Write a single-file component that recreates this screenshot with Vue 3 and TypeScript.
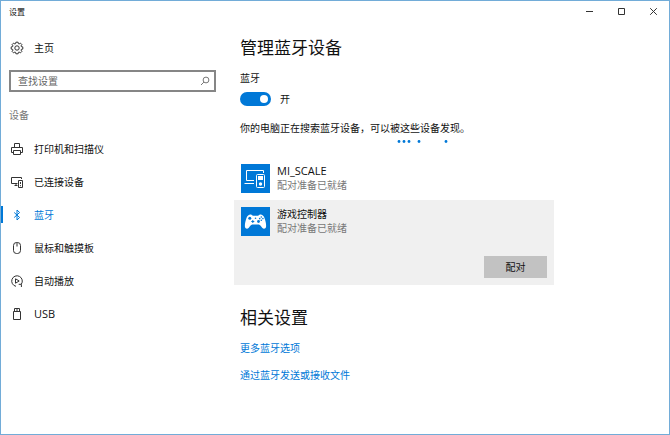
<script setup lang="ts">
import { ref } from 'vue'

interface NavItem {
  id: string
  label: string
  latin?: boolean
}

interface Device {
  id: string
  name: string
  status: string
  latin?: boolean
}

const navItems: NavItem[] = [
  { id: 'printer', label: '打印机和扫描仪' },
  { id: 'connected', label: '已连接设备' },
  { id: 'bluetooth', label: '蓝牙' },
  { id: 'mouse', label: '鼠标和触摸板' },
  { id: 'autoplay', label: '自动播放' },
  { id: 'usb', label: 'USB', latin: true },
]

const devices: Device[] = [
  { id: 'scale', name: 'MI_SCALE', status: '配对准备已就绪', latin: true },
  { id: 'gamepad', name: '游戏控制器', status: '配对准备已就绪' },
]

const links: string[] = ['更多蓝牙选项', '通过蓝牙发送或接收文件']

const current = ref('bluetooth')
const selected = ref('gamepad')
const enabled = ref(true)
const query = ref('')
</script>

<template>
  <div class="window">
    <header class="titlebar">
      <span class="title">设置</span>
      <div class="controls">
        <button type="button" class="control" aria-label="最小化">
          <svg width="9" height="9" viewBox="0 0 9 9"><path d="M1 4.5H8" /></svg>
        </button>
        <button type="button" class="control" aria-label="最大化">
          <svg width="9" height="9" viewBox="0 0 9 9"><path d="M1.5 1.5H7.5V7.5H1.5Z" /></svg>
        </button>
        <button type="button" class="control" aria-label="关闭">
          <svg width="9" height="9" viewBox="0 0 9 9"><path d="M1.2 1.2L7.8 7.8M7.8 1.2L1.2 7.8" /></svg>
        </button>
      </div>
    </header>

    <div class="body">
      <aside class="sidebar">
        <a href="#home" class="home">
          <svg class="icon" viewBox="0 0 14 14">
            <path d="M5.9 1.2H8.1L8.4 2.7L9.1 3L10.4 2.1L11.9 3.6L11 4.9L11.3 5.6L12.8 5.9V8.1L11.3 8.4L11 9.1L11.9 10.4L10.4 11.9L9.1 11L8.4 11.3L8.1 12.8H5.9L5.6 11.3L4.9 11L3.6 11.9L2.1 10.4L3 9.1L2.7 8.4L1.2 8.1V5.9L2.7 5.6L3 4.9L2.1 3.6L3.6 2.1L4.9 3L5.6 2.7Z" />
            <circle cx="7" cy="7" r="2.2" />
          </svg>
          <span>主页</span>
        </a>
        <label class="search">
          <input v-model="query" type="text" placeholder="查找设置" aria-label="查找设置" />
          <svg width="10" height="10" viewBox="0 0 10 10">
            <circle cx="6" cy="4" r="2.9" />
            <path d="M3.9 6.1L1 9" />
          </svg>
        </label>
        <h2 class="group">设备</h2>
        <nav>
          <a
            v-for="item in navItems"
            :key="item.id"
            :href="'#' + item.id"
            class="nav-item"
            :class="{ active: current === item.id }"
            @click.prevent="current = item.id"
          >
            <svg v-if="item.id === 'printer'" class="icon" viewBox="0 0 14 14">
              <path d="M4.5 5.5V1.5H9.5V5.5M3.5 10.5H1.5V5.5H12.5V10.5H10.5M3.5 8.5H10.5V12.5H3.5Z" />
            </svg>
            <svg v-else-if="item.id === 'connected'" class="icon" viewBox="0 0 14 14">
              <path d="M7.5 8.5H1.5V2.5H11.5V4M4.5 10.5H7.5M6 8.5V10.5M8.5 5.5H12.5V12.5H8.5Z" />
              <path d="M10.5 7V9M10.5 10.2V11.2" />
            </svg>
            <svg v-else-if="item.id === 'bluetooth'" class="icon" viewBox="0 0 14 14">
              <path d="M4.2 4.5L9.6 9.5L7 12V2L9.6 4.5L4.2 9.5" />
            </svg>
            <svg v-else-if="item.id === 'mouse'" class="icon" viewBox="0 0 14 14">
              <rect x="3.5" y="1.5" width="7" height="11" rx="3" />
              <path d="M7 1.5V5.5" />
            </svg>
            <svg v-else-if="item.id === 'autoplay'" class="icon" viewBox="0 0 14 14">
              <path d="M6 12.3A5.3 5.3 0 1 1 11.3 10.2M8.7 10.3H11.4V13M5.5 4.8V9.2L9.2 7Z" />
            </svg>
            <svg v-else class="icon" viewBox="0 0 14 14">
              <path d="M4.5 4.5V1.5H9.5V4.5M3.5 4.5H10.5V12.5H3.5ZM6 3H8" />
            </svg>
            <span :class="{ latin: item.latin }">{{ item.label }}</span>
          </a>
        </nav>
      </aside>

      <main class="content">
        <h1>管理蓝牙设备</h1>
        <label class="toggle-label" for="bluetooth-switch">蓝牙</label>
        <div class="toggle">
          <input id="bluetooth-switch" v-model="enabled" type="checkbox" role="switch" />
          <span>{{ enabled ? '开' : '关' }}</span>
        </div>
        <p class="hint">你的电脑正在搜索蓝牙设备，可以被这些设备发现。</p>
        <div class="progress">
          <svg width="52" height="3" viewBox="0 0 52 3">
            <circle cx="2" cy="1.5" r="1.4" />
            <circle cx="7" cy="1.5" r="1.4" />
            <circle cx="12" cy="1.5" r="1.4" />
            <circle cx="22" cy="1.5" r="1.4" />
            <circle cx="49" cy="1.5" r="1.4" />
          </svg>
        </div>

        <ul class="devices">
          <li
            v-for="device in devices"
            :key="device.id"
            class="device"
            :class="{ selected: selected === device.id }"
            @click="selected = device.id"
          >
            <div class="summary">
              <svg v-if="device.id === 'scale'" class="tile" viewBox="0 0 29 29">
                <path class="line" d="M13 16.5H5.5V6.5H22.5V9M3.5 19.5H13" />
                <rect class="line" x="15.5" y="10.5" width="8" height="13" rx="1" />
                <rect class="fill" x="17" y="12" width="5" height="4" />
                <circle class="fill" cx="19.5" cy="20" r="1.7" />
              </svg>
              <svg v-else class="tile" viewBox="0 0 29 29">
                <path class="fill" d="M9 7.5C10.2 7.2 11 8 11.8 8.7H17.2C18 8 18.8 7.2 20 7.5C22.4 8 23.3 10 24 12.6C24.7 15 25.4 18 25 20C24.6 22 22.5 22.2 21.2 20.8C20.2 19.6 19.2 17.8 17.8 17.5H11.2C9.8 17.8 8.8 19.6 7.8 20.8C6.5 22.2 4.4 22 4 20C3.6 18 4.3 15 5 12.6C5.7 10 6.6 8 9 7.5Z" />
                <circle class="hole" cx="8.8" cy="11.3" r="1.5" />
                <path class="cross" d="M11.8 13V16M10.3 14.5H13.3" />
                <circle class="hole" cx="17.5" cy="14.5" r="1.4" />
                <circle class="hole" cx="20.3" cy="10" r="0.8" />
                <circle class="hole" cx="20.3" cy="13.2" r="0.8" />
                <circle class="hole" cx="18.7" cy="11.6" r="0.8" />
                <circle class="hole" cx="21.9" cy="11.6" r="0.8" />
                <circle class="hole" cx="14.5" cy="11.3" r="0.8" />
              </svg>
              <div class="text">
                <span :class="{ latin: device.latin }">{{ device.name }}</span>
                <span class="status">{{ device.status }}</span>
              </div>
            </div>
            <button v-if="selected === device.id" type="button" class="pair">配对</button>
          </li>
        </ul>

        <h1 class="related">相关设置</h1>
        <div class="links">
          <a v-for="link in links" :key="link" href="#related">{{ link }}</a>
        </div>
      </main>
    </div>
  </div>
</template>

<style>
body {
  margin: 0;
}
</style>

<style scoped>
.window {
  box-sizing: border-box;
  min-height: 100vh;
  border: 1px solid #72acd8;
  background: #fff;
  color: #111;
  font-family: "Open Sans", "Noto Sans CJK SC", sans-serif;
  font-size: 10px;
  line-height: 16px;
}

.window *,
.window *::before {
  box-sizing: border-box;
}

a {
  color: inherit;
  text-decoration: none;
}

button,
input {
  margin: 0;
  border: 0;
  padding: 0;
  background: none;
  color: inherit;
  font: inherit;
}

svg {
  flex: none;
  fill: none;
  stroke: #333;
  stroke-width: 1;
}

.latin {
  font-size: 11px;
}

.titlebar {
  display: flex;
  align-items: center;
  justify-content: space-between;
  height: 21px;
  padding-left: 8px;
}

.title {
  font-size: 8px;
}

.controls {
  display: flex;
}

.control {
  display: flex;
  align-items: center;
  justify-content: center;
  width: 32px;
  height: 21px;
}

.body {
  display: flex;
  padding-top: 10px;
}

.sidebar {
  flex: none;
  width: 233px;
}

.home,
.nav-item {
  display: flex;
  align-items: center;
  gap: 10px;
  padding-left: 9px;
}

.home {
  height: 32px;
}

.icon {
  width: 14px;
  height: 14px;
}

.search {
  display: flex;
  align-items: center;
  height: 22px;
  margin: 6px 18px 0 8px;
  border: 2px solid #868686;
  padding: 0 4px 0 7px;
}

.search input {
  flex: 1;
  min-width: 0;
  outline: 0;
}

.search input::placeholder {
  color: #666;
  opacity: 1;
}

.search svg {
  stroke: #777;
}

.group {
  margin: 7px 0 1px;
  padding-left: 8px;
  color: #777;
  font-size: 10px;
  font-weight: 400;
  line-height: 32px;
}

.nav-item {
  position: relative;
  height: 33px;
}

.nav-item.active {
  color: #0078d7;
}

.nav-item.active svg {
  stroke: #0078d7;
}

.nav-item.active::before {
  position: absolute;
  top: 8px;
  left: 0;
  width: 2px;
  height: 17px;
  background: #0078d7;
  content: "";
}

.content {
  flex: 1;
  min-width: 0;
  padding: 0 6px 24px;
}

h1 {
  margin: 0;
  font-size: 17px;
  font-weight: 400;
  line-height: 32px;
}

.toggle-label {
  display: block;
  margin-top: 6px;
}

.toggle {
  display: flex;
  align-items: center;
  gap: 9px;
  height: 14px;
  margin-top: 6px;
}

.toggle input {
  display: flex;
  align-items: center;
  width: 31px;
  height: 14px;
  border-radius: 7px;
  padding: 0 3px;
  background: #999;
  appearance: none;
}

.toggle input::before {
  width: 8px;
  height: 8px;
  border-radius: 4px;
  background: #fff;
  content: "";
}

.toggle input:checked {
  justify-content: flex-end;
  background: #0078d7;
}

.hint {
  margin: 14px 0 4px;
}

.progress {
  display: flex;
  justify-content: center;
  max-width: 366px;
}

.progress svg {
  fill: #0078d7;
  stroke: none;
}

.devices {
  display: flex;
  flex-direction: column;
  max-width: 320px;
  margin: 14px 0 0 -6px;
  padding: 0;
  list-style: none;
}

.device {
  display: flex;
  flex-direction: column;
  padding: 7px;
}

.device.selected {
  background: #f0f0f0;
}

.summary {
  display: flex;
  align-items: flex-start;
  gap: 7px;
}

.tile {
  width: 29px;
  height: 29px;
  background: #0078d7;
}

.line {
  fill: #0078d7;
  stroke: #fff;
}

.fill {
  fill: #fff;
  stroke: none;
}

.hole {
  fill: #0078d7;
  stroke: none;
}

.cross {
  stroke: #0078d7;
}

.text {
  display: flex;
  flex-direction: column;
  line-height: 14px;
}

.status {
  color: #777;
}

.pair {
  align-self: flex-end;
  width: 63px;
  height: 22px;
  margin-top: 20px;
  background: #c2c2c2;
}

.related {
  margin-top: 17px;
}

.links {
  display: flex;
  flex-direction: column;
  align-items: flex-start;
  gap: 11px;
  margin-top: 6px;
  color: #0078d7;
}
</style>
